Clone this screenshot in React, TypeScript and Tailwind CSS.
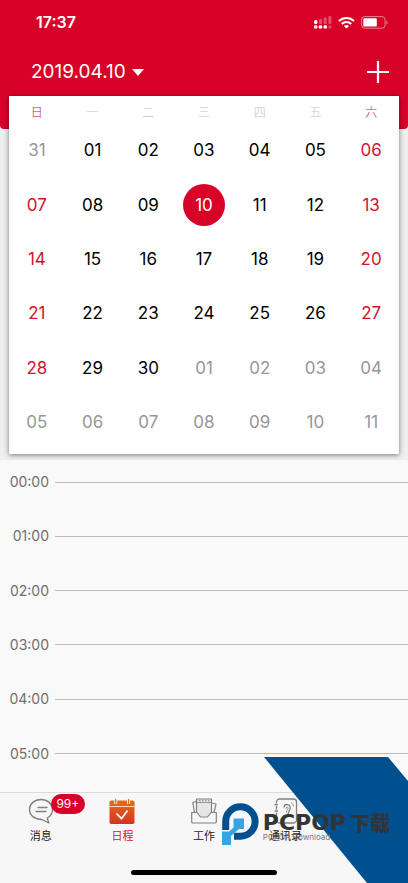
import { useState } from 'react'
import type { ReactNode } from 'react'

const WEEKDAYS = ['日', '一', '二', '三', '四', '五', '六']

const HOURS = ['00:00', '01:00', '02:00', '03:00', '04:00', '05:00']

const pad = (n: number) => String(n).padStart(2, '0')

type Day = { label: string; current: boolean }

const DAYS: Day[] = [
  { label: '31', current: false },
  ...Array.from({ length: 30 }, (_, i) => ({ label: pad(i + 1), current: true })),
  ...Array.from({ length: 11 }, (_, i) => ({ label: pad(i + 1), current: false })),
]

function dayColor(day: Day, index: number) {
  if (!day.current) return 'text-[#96969b]'
  return index % 7 === 0 || index % 7 === 6 ? 'text-[#d0142f]' : 'text-black'
}

function StatusBar() {
  return (
    <div className="flex h-11 items-center justify-between pr-5 pl-9 text-white">
      <span className="text-base font-semibold">17:37</span>
      <div className="flex items-center gap-1.5">
        <svg viewBox="0 0 18 14" className="h-3.5 w-[18px]" fill="currentColor" aria-hidden="true">
          <rect x="0" y="5" width="3.4" height="4" rx="1.5" />
          <g opacity="0.3">
            <rect x="5" y="4" width="3" height="5" rx="1" />
            <rect x="9.7" y="2.5" width="3" height="6.5" rx="1" />
            <rect x="14.4" y="1" width="3" height="8" rx="1" />
            <rect x="14.4" y="10.5" width="3" height="3" rx="1" />
          </g>
          <rect x="0" y="10.2" width="3.4" height="3.4" rx="1.2" />
          <rect x="4.8" y="10.2" width="3.4" height="3.4" rx="1.2" />
          <rect x="9.6" y="10.2" width="3.4" height="3.4" rx="1.2" />
        </svg>
        <svg viewBox="0 0 17 13" className="h-[13px] w-[17px]" fill="none" stroke="currentColor" strokeWidth="2.1" aria-hidden="true">
          <path d="M1 5C5.2 .9 11.8 .9 16 5" />
          <path d="M3.8 7.9C6.4 5.4 10.6 5.4 13.2 7.9" />
          <path d="M8.5 12.5L5.9 9.9C7.3 8.6 9.7 8.6 11.1 9.9Z" fill="currentColor" stroke="none" />
        </svg>
        <svg viewBox="0 0 27 13" className="h-[13px] w-[27px]" aria-hidden="true">
          <rect x="0.6" y="0.6" width="23.5" height="11.6" rx="3.2" fill="none" stroke="white" strokeOpacity="0.5" />
          <rect x="2.3" y="2.2" width="13.5" height="8.4" rx="1.2" fill="white" />
          <path d="M25.4 4.5v4c1.5-.6 1.5-3.4 0-4z" fill="white" fillOpacity="0.5" />
        </svg>
      </div>
    </div>
  )
}

function ChatIcon() {
  return (
    <svg viewBox="0 0 26 26" className="h-[26px] w-[26px]" fill="none" stroke="#808080" strokeWidth="1.4" strokeLinecap="round" strokeLinejoin="round" aria-hidden="true">
      <path d="M13 1.500C6.500 1.500 1.500 5.800 1.500 11.500S6.500 21.500 14 21.500L20.800 25L19.200 20C22.500 18.200 24.500 15.300 24.500 11.500C24.500 5.800 19.500 1.500 13 1.500Z" />
      <path d="M10 9.500h9M8 13.500h10" />
    </svg>
  )
}

function ScheduleIcon() {
  return (
    <svg viewBox="0 0 26 26" className="h-[26px] w-[26px]" aria-hidden="true">
      <defs>
        <linearGradient id="schedule-fill" x1="0" y1="0" x2="0" y2="1">
          <stop offset="0" stopColor="#ee6a12" />
          <stop offset="1" stopColor="#cf3724" />
        </linearGradient>
      </defs>
      <rect x="0.5" y="2.5" width="25" height="23.5" rx="1.8" fill="url(#schedule-fill)" />
      <path d="M.5 8.500h25" stroke="#f9d5bb" strokeWidth="1.100" />
      <path d="M6.700 0v6M19.500 0v6" stroke="#f7f7f7" strokeWidth="3" />
      <path d="M6.700 1.500v4M19.500 1.500v4" stroke="#ee6a12" strokeWidth="1.300" strokeLinecap="round" />
      <path d="M7.500 15.500l5 5.200L18.500 12.500" fill="none" stroke="white" strokeWidth="1.800" />
    </svg>
  )
}

function WorkIcon() {
  return (
    <svg viewBox="0 0 26 26" className="h-[26px] w-[26px]" fill="none" stroke="#808080" strokeWidth="1.2" strokeLinejoin="round" aria-hidden="true">
      <path d="M3.500 14.500L1.800 4.500L5.500 3.500M21 5L25 6L23 14.500" />
      <path d="M5.500 18V1h15v17" fill="#e6e6e6" />
      <path d="M5.500 4.500h15" strokeWidth="0.8" />
      <path d="M8 2.800h1.500M11 2.800h1.500M14 2.800h1.500M17 2.800h1.500" strokeWidth="1" />
      <path d="M.7 14.500H6l3.500 4.500h7l3.500-4.500h5.300v9.200a1.300 1.300 0 0 1-1.300 1.300H2a1.300 1.300 0 0 1-1.300-1.300z" fill="#f7f7f7" />
    </svg>
  )
}

function ContactsIcon() {
  return (
    <svg viewBox="0 0 26 26" className="h-[26px] w-[26px]" fill="none" stroke="#808080" strokeWidth="1.3" strokeLinecap="round" aria-hidden="true">
      <path d="M3.500 5V4a3 3 0 0 1 3-3h14a3 3 0 0 1 3 3v18a3 3 0 0 1-3 3h-14a3 3 0 0 1-3-3v-1M3.500 8.500v2.500M3.500 15v2.500" />
      <path d="M2 6.700h2.500M2 13h2.500M2 19.300h2.500" />
      <path d="M11 9C11.500 5.500 17.500 5.500 17.200 10.300C17 13.500 14.800 14 15 16.500C15 19.800 11.500 20 10.500 18" />
      <path d="M13 10.500c.2-2 2.300-1.800 2.100 0c0 1.500-1.900 1.500-1.600 3.500M18.500 5c1.300.8 1.800 1.800 1.900 3" strokeWidth="0.9" />
    </svg>
  )
}

type Tab = { label: string; icon: ReactNode; badge?: string }

const TABS: Tab[] = [
  { label: '消息', icon: <ChatIcon />, badge: '99+' },
  { label: '日程', icon: <ScheduleIcon /> },
  { label: '工作', icon: <WorkIcon /> },
  { label: '通讯录', icon: <ContactsIcon /> },
]

function TabBar() {
  const [active, setActive] = useState('日程')

  return (
    <nav className="flex h-[91px] shrink-0 flex-col justify-between border-t border-[#dcdcdc] bg-[#f7f7f7] pb-2">
      <div className="grid w-full grid-cols-5">
        {TABS.map(({ label, icon, badge }) => (
          <button
            key={label}
            type="button"
            onClick={() => setActive(label)}
            className={`flex flex-col items-center gap-1 pt-[5px] text-[11px] leading-4 ${
              active === label ? 'text-[#d4143a]' : 'text-[#222]'
            }`}
          >
            <span className="relative">
              {icon}
              {badge && (
                <span className="absolute -top-1 left-[23px] flex h-5 w-[34px] items-center justify-center rounded-full bg-[#d80229] text-xs text-white">
                  {badge}
                </span>
              )}
            </span>
            {label}
          </button>
        ))}
      </div>
      <div className="mx-auto h-[5px] w-[146px] rounded-full bg-black" />
    </nav>
  )
}

function Watermark() {
  return (
    <div className="pointer-events-none absolute right-0 bottom-0 text-[#333436]">
      <svg viewBox="0 0 144 126" className="h-[126px] w-36" aria-hidden="true">
        <path d="M0 0H124L144 24V126H103Z" fill="#00508f" />
      </svg>
      <div className="absolute right-[18px] bottom-[38px] flex items-center gap-1">
        <svg viewBox="0 0 37 42" className="h-[42px] w-[37px]" aria-hidden="true">
          <path d="M3.700 27V18.500A14.700 14.700 0 1 1 18.400 33.200H12" fill="none" stroke="#00508f" strokeWidth="7" />
          <path d="M11.500 15.500H22V26H17L9 33V42H0V28.500H7L11.500 24.500Z" fill="#36a5e4" />
        </svg>
        <div className="flex flex-col pt-1.5">
          <span className="flex items-center gap-1 leading-5">
            <span className="font-['DejaVu_Sans',sans-serif] text-[22px] font-bold">PCPOP</span>
            <span className="font-['Noto_Sans_CJK_SC',sans-serif] text-xl leading-5 font-black whitespace-nowrap">下载</span>
          </span>
          <span className="text-[8px] leading-2 text-[#777]">PCPOP Download</span>
        </div>
      </div>
    </div>
  )
}

export default function App() {
  const [selected, setSelected] = useState(10)

  return (
    <div className="relative flex h-screen flex-col overflow-hidden bg-[#efefef] font-[Inter,'Noto_Sans_CJK_SC',sans-serif]">
      <header className="h-[129px] shrink-0 rounded-b bg-[#d80229]">
        <StatusBar />
        <div className="flex h-14 items-center justify-between pr-[18px] pl-[31px] text-white">
          <button type="button" className="flex items-center gap-1.5 text-[19px]">
            2019.04.10
            <svg viewBox="0 0 12 7" className="h-[7px] w-3" fill="currentColor" aria-hidden="true">
              <path d="M0 0h12L6 7z" />
            </svg>
          </button>
          <button type="button" aria-label="新建日程">
            <svg viewBox="0 0 24 24" className="h-6 w-6" stroke="currentColor" strokeWidth="2.2" aria-hidden="true">
              <path d="M12 1v22M1 12h22" />
            </svg>
          </button>
        </div>
      </header>

      {/* Month */}
      <section className="mx-[9px] -mt-[33px] mb-[6px] shrink-0 bg-white pb-1 shadow-[0_1px_5px_rgba(0,0,0,0.5)]">
        <div className="grid h-7 grid-cols-7 items-center pt-1.5 text-center text-xs font-light">
          {WEEKDAYS.map((name, i) => (
            <span key={name} className={i === 0 || i === 6 ? 'text-[#d0142f]' : 'text-[#c4c4c4]'}>
              {name}
            </span>
          ))}
        </div>
        <div className="grid h-[326px] grid-cols-7 grid-rows-6">
          {DAYS.map((day, i) => (
            <button
              key={i}
              type="button"
              onClick={() => setSelected(i)}
              className="flex items-center justify-center text-[17px]"
            >
              <span
                className={`flex h-[42px] w-[42px] items-center justify-center rounded-full ${
                  selected === i ? 'bg-[#d80229] text-white' : dayColor(day, i)
                }`}
              >
                {day.label}
              </span>
            </button>
          ))}
        </div>
      </section>

      {/* Timeline */}
      <section className="min-h-0 flex-1 overflow-hidden bg-[#f9f9f9] pt-3">
        <ul className="grid h-[326px] grid-rows-6">
          {HOURS.map((hour) => (
            <li key={hour} className="flex h-5 items-center gap-1.5 text-sm text-[#6e6e70]">
              <span className="w-[49px] text-right">{hour}</span>
              <span className="h-px flex-1 bg-[#bcbcbc]" />
            </li>
          ))}
        </ul>
      </section>

      <TabBar />
      <Watermark />
    </div>
  )
}
